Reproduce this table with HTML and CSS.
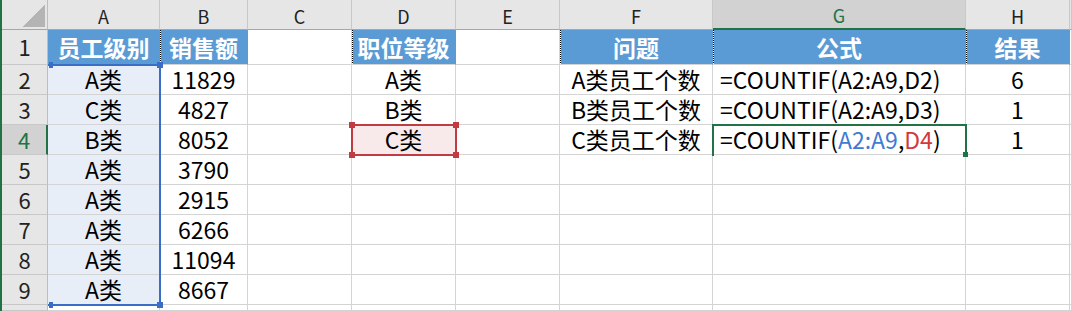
FILE: index.html
```html
<!DOCTYPE html>
<html lang="zh-CN">
<head>
    <meta charset="UTF-8">
    <meta name="viewport" content="width=device-width, initial-scale=1.0">
    <title>COUNTIF</title>
    <link rel="stylesheet" href="styles.css">
</head>
<body>
    <div class="sheet">
        <div class="cells">
            <!-- column headers -->
            <div class="corner"><span class="corner-mark"></span></div>
            <div class="col-head">A</div>
            <div class="col-head">B</div>
            <div class="col-head">C</div>
            <div class="col-head">D</div>
            <div class="col-head">E</div>
            <div class="col-head">F</div>
            <div class="col-head on">G</div>
            <div class="col-head">H</div>
            <div class="col-head"></div>

            <!-- row 1 -->
            <div class="row-head">1</div>
            <div class="cell title">员工级别</div>
            <div class="cell title ants">销售额</div>
            <div class="cell"></div>
            <div class="cell title ants">职位等级</div>
            <div class="cell"></div>
            <div class="cell title ants">问题</div>
            <div class="cell title ants">公式</div>
            <div class="cell title ants">结果</div>
            <div class="cell"></div>

            <!-- row 2 -->
            <div class="row-head">2</div>
            <div class="cell pick-a">A类</div>
            <div class="cell">11829</div>
            <div class="cell"></div>
            <div class="cell">A类</div>
            <div class="cell"></div>
            <div class="cell">A类员工个数</div>
            <div class="cell left">=COUNTIF(A2:A9,D2)</div>
            <div class="cell">6</div>
            <div class="cell"></div>

            <!-- row 3 -->
            <div class="row-head">3</div>
            <div class="cell pick-a">C类</div>
            <div class="cell">4827</div>
            <div class="cell"></div>
            <div class="cell">B类</div>
            <div class="cell"></div>
            <div class="cell">B类员工个数</div>
            <div class="cell left">=COUNTIF(A2:A9,D3)</div>
            <div class="cell">1</div>
            <div class="cell"></div>

            <!-- row 4 -->
            <div class="row-head on">4</div>
            <div class="cell pick-a">B类</div>
            <div class="cell">8052</div>
            <div class="cell"></div>
            <div class="cell pick-d">C类</div>
            <div class="cell"></div>
            <div class="cell">C类员工个数</div>
            <div class="cell left">=COUNTIF(<span class="ref-a">A2:A9</span>,<span class="ref-d">D4</span>)</div>
            <div class="cell">1</div>
            <div class="cell"></div>

            <!-- row 5 -->
            <div class="row-head">5</div>
            <div class="cell pick-a">A类</div>
            <div class="cell">3790</div>
            <div class="cell"></div>
            <div class="cell"></div>
            <div class="cell"></div>
            <div class="cell"></div>
            <div class="cell"></div>
            <div class="cell"></div>
            <div class="cell"></div>

            <!-- row 6 -->
            <div class="row-head">6</div>
            <div class="cell pick-a">A类</div>
            <div class="cell">2915</div>
            <div class="cell"></div>
            <div class="cell"></div>
            <div class="cell"></div>
            <div class="cell"></div>
            <div class="cell"></div>
            <div class="cell"></div>
            <div class="cell"></div>

            <!-- row 7 -->
            <div class="row-head">7</div>
            <div class="cell pick-a">A类</div>
            <div class="cell">6266</div>
            <div class="cell"></div>
            <div class="cell"></div>
            <div class="cell"></div>
            <div class="cell"></div>
            <div class="cell"></div>
            <div class="cell"></div>
            <div class="cell"></div>

            <!-- row 8 -->
            <div class="row-head">8</div>
            <div class="cell pick-a">A类</div>
            <div class="cell">11094</div>
            <div class="cell"></div>
            <div class="cell"></div>
            <div class="cell"></div>
            <div class="cell"></div>
            <div class="cell"></div>
            <div class="cell"></div>
            <div class="cell"></div>

            <!-- row 9 -->
            <div class="row-head">9</div>
            <div class="cell pick-a">A类</div>
            <div class="cell">8667</div>
            <div class="cell"></div>
            <div class="cell"></div>
            <div class="cell"></div>
            <div class="cell"></div>
            <div class="cell"></div>
            <div class="cell"></div>
            <div class="cell"></div>

            <!-- top sliver of row 10 -->
            <div class="row-head"></div>
            <div class="cell"></div>
            <div class="cell"></div>
            <div class="cell"></div>
            <div class="cell"></div>
            <div class="cell"></div>
            <div class="cell"></div>
            <div class="cell"></div>
            <div class="cell"></div>
            <div class="cell"></div>
        </div>

        <!-- range outlines drawn over the cells while the formula is edited -->
        <div class="marks">
            <div class="frame frame-a">
                <span class="knob tl"></span><span class="knob tr"></span>
                <span class="knob bl"></span><span class="knob br"></span>
            </div>
            <div class="frame frame-d">
                <span class="knob tl"></span><span class="knob tr"></span>
                <span class="knob bl"></span><span class="knob br"></span>
            </div>
            <div class="frame frame-edit">
                <span class="knob br"></span>
            </div>
        </div>
    </div>
</body>
</html>
```

FILE: styles.css
```css
html, body {
    margin: 0;
    overflow: hidden;
    background: #fff;
}
body {
    font-family: "Noto Sans CJK SC", sans-serif;
    color: #000;
}
.sheet {
    display: grid;
    border-left: 2px solid #217346;
}
.cells,
.marks {
    grid-area: 1 / 1;
    display: grid;
    grid-template-columns: 46px 112px 88px 104px 104px 104px 153px 253px 104px 1fr;
    grid-template-rows: 30px 35px repeat(8, 30px) 6px;
}
.marks {
    pointer-events: none;
}

/* headers */
.corner,
.col-head,
.row-head,
.cell {
    box-sizing: border-box;
    display: flex;
    align-items: center;
    justify-content: center;
    white-space: nowrap;
    line-height: 1.15;
}
.corner {
    background: #e6e6e6;
    border-right: 1px solid #bdbdbd;
    border-bottom: 1px solid #a6a6a6;
    align-items: flex-end;
    justify-content: flex-end;
    padding: 0 2px 2px 0;
}
.corner-mark {
    width: 23px;
    height: 22px;
    background: linear-gradient(to bottom right, transparent 50%, #b4b4b4 50%);
}
.col-head {
    background: #e6e6e6;
    border-right: 1px solid #c8c8c8;
    border-bottom: 1px solid #a6a6a6;
    font-size: 18px;
    color: #222;
    padding-top: 3px;
}
.col-head.on {
    background: #d2d2d2;
    color: #217346;
    border-bottom: 2px solid #217346;
}
.row-head {
    background: #e6e6e6;
    border-right: 1px solid #bdbdbd;
    border-bottom: 1px solid #c8c8c8;
    font-size: 22px;
    color: #222;
}
.row-head.on {
    background: #d2d2d2;
    color: #217346;
    border-right: 2px solid #217346;
}

/* cells */
.cell {
    border-right: 1px solid #d4d4d4;
    border-bottom: 1px solid #d4d4d4;
    font-size: 23px;
}
.cell.left {
    justify-content: flex-start;
    padding-left: 7px;
}
.title {
    background: #5b9bd5;
    border-right-color: #5b9bd5;
    color: #fff;
    font-weight: bold;
}
.ants {
    background: repeating-linear-gradient(#000 0 1px, #fff 1px 2px) left top / 1px 100% no-repeat, #5b9bd5;
}
.pick-a {
    background: #e8eef8;
}
.pick-d {
    background: #f8e9ea;
}
.ref-a {
    color: #3f7ad3;
}
.ref-d {
    color: #d13a3a;
}

/* range frames */
.frame {
    position: relative;
    margin: -1px;
    border: 2px solid transparent;
}
.frame-a {
    grid-column: 2;
    grid-row: 3 / 11;
    margin-left: 0;
    border-color: #3a6ec6;
    border-left: none;
}
.frame-d {
    grid-column: 5;
    grid-row: 5;
    border-color: #c23b43;
}
.frame-edit {
    grid-column: 8;
    grid-row: 5;
    border-color: #217346;
    border-bottom: none;
}
.knob {
    position: absolute;
    width: 6px;
    height: 6px;
}
.frame-a .knob { background: #3a6ec6; }
.frame-d .knob { background: #c23b43; }
.frame-edit .knob { background: #217346; }
.knob.tl { left: -4px; top: -4px; }
.knob.tr { right: -4px; top: -4px; }
.knob.bl { left: -4px; bottom: -4px; }
.knob.br { right: -4px; bottom: -4px; }
.frame-a .knob.tl,
.frame-a .knob.bl {
    left: 1px;
    width: 4px;
}
.frame-edit .knob.br {
    right: -3px;
    bottom: -1px;
    width: 5px;
    height: 5px;
}
```
